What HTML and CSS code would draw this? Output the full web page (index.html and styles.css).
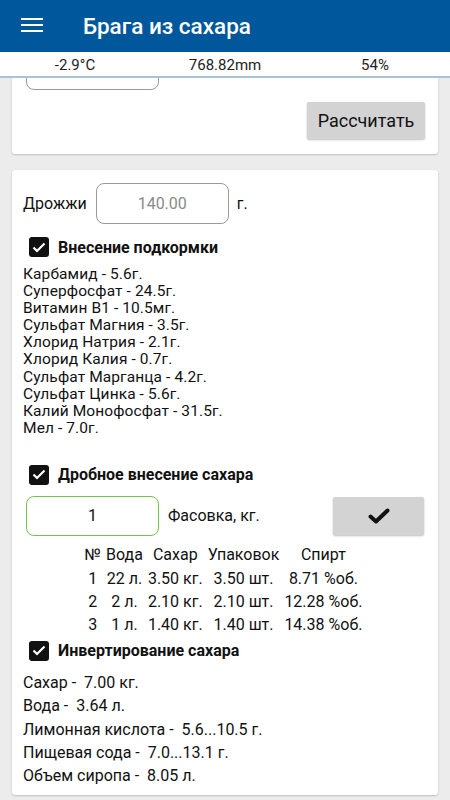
FILE: index.html
```html
<!DOCTYPE html>
<html lang="ru">
<head>
<meta charset="utf-8">
<title>Брага из сахара</title>
<link rel="stylesheet" href="styles.css">
</head>
<body>
<div class="app">
  <header class="topbar">
    <svg class="menu" width="22" height="14" viewBox="0 0 22 14"><rect x="0" y="0" width="22" height="2" fill="#fff"/><rect x="0" y="6" width="22" height="2" fill="#fff"/><rect x="0" y="12" width="22" height="2" fill="#fff"/></svg>
    <h1 class="title">Брага из сахара</h1>
  </header>
  <div class="weather">
    <span>-2.9°C</span>
    <span>768.82mm</span>
    <span>54%</span>
  </div>
  <main class="content">
    <div class="scroll">
      <section class="card card-top">
        <div class="row-top">
          <div class="field field-top"></div>
        </div>
        <div class="row-btn">
          <button class="btn">Рассчитать</button>
        </div>
      </section>

      <section class="card card-main">
        <div class="row">
          <span class="label">Дрожжи</span>
          <div class="field field-gray">140.00</div>
          <span class="unit">г.</span>
        </div>

        <div class="check-row">
          <span class="checkbox"><svg width="14" height="11" viewBox="0 0 14 11"><path d="M1.5 5.5 L5 9 L12.5 1.5" fill="none" stroke="#fff" stroke-width="2.2"/></svg></span>
          <span class="check-label">Внесение подкормки</span>
        </div>

        <ul class="list">
          <li>Карбамид - 5.6г.</li>
          <li>Суперфосфат - 24.5г.</li>
          <li>Витамин В1 - 10.5мг.</li>
          <li>Сульфат Магния - 3.5г.</li>
          <li>Хлорид Натрия - 2.1г.</li>
          <li>Хлорид Калия - 0.7г.</li>
          <li>Сульфат Марганца - 4.2г.</li>
          <li>Сульфат Цинка - 5.6г.</li>
          <li>Калий Монофосфат - 31.5г.</li>
          <li>Мел - 7.0г.</li>
        </ul>

        <div class="check-row check-row-2">
          <span class="checkbox"><svg width="14" height="11" viewBox="0 0 14 11"><path d="M1.5 5.5 L5 9 L12.5 1.5" fill="none" stroke="#fff" stroke-width="2.2"/></svg></span>
          <span class="check-label">Дробное внесение сахара</span>
        </div>

        <div class="row row-pack">
          <div class="field field-green">1</div>
          <span class="pack-label">Фасовка, кг.</span>
          <button class="btn btn-check"><svg width="22" height="16" viewBox="0 0 22 16"><path d="M2.5 8.5 L8 13.5 L19.5 2.5" fill="none" stroke="#111" stroke-width="4" stroke-linecap="round" stroke-linejoin="round"/></svg></button>
        </div>

        <table class="tbl">
          <thead>
            <tr><th>№</th><th>Вода</th><th>Сахар</th><th>Упаковок</th><th>Спирт</th></tr>
          </thead>
          <tbody>
            <tr><td>1</td><td>22 л.</td><td>3.50 кг.</td><td>3.50 шт.</td><td>8.71 %об.</td></tr>
            <tr><td>2</td><td>2 л.</td><td>2.10 кг.</td><td>2.10 шт.</td><td>12.28 %об.</td></tr>
            <tr><td>3</td><td>1 л.</td><td>1.40 кг.</td><td>1.40 шт.</td><td>14.38 %об.</td></tr>
          </tbody>
        </table>

        <div class="check-row check-row-3">
          <span class="checkbox"><svg width="14" height="11" viewBox="0 0 14 11"><path d="M1.5 5.5 L5 9 L12.5 1.5" fill="none" stroke="#fff" stroke-width="2.2"/></svg></span>
          <span class="check-label">Инвертирование сахара</span>
        </div>

        <ul class="list list-inv">
          <li>Сахар -&nbsp; 7.00 кг.</li>
          <li>Вода -&nbsp; 3.64 л.</li>
          <li>Лимонная кислота -&nbsp; 5.6...10.5 г.</li>
          <li>Пищевая сода -&nbsp; 7.0...13.1 г.</li>
          <li>Объем сиропа -&nbsp; 8.05 л.</li>
        </ul>
      </section>
    </div>
  </main>
</div>
</body>
</html>
```

FILE: styles.css
```css
* { box-sizing: border-box; }
html, body { margin: 0; padding: 0; }
body {
  font-family: Roboto, "Noto Sans", sans-serif;
  background: #ececec;
  color: #111;
  width: 450px;
  height: 800px;
  overflow: hidden;
}
.app { display: flex; flex-direction: column; height: 800px; }
.topbar {
  height: 52px;
  background: #01579b;
  display: flex;
  align-items: center;
  padding-left: 21px;
  flex: none;
}
.menu { display: block; margin-top: -3px; }
.title {
  margin: 0 0 0 40px;
  color: #fff;
  font-size: 22.5px;
  font-weight: 500;
}
.weather {
  height: 26px;
  background: #fff;
  border-bottom: 2px solid #a8c2da;
  display: grid;
  grid-template-columns: 1fr 1fr 1fr;
  align-items: center;
  font-size: 15px;
  color: #222;
  text-align: center;
  flex: none;
  position: relative;
  z-index: 2;
}
.weather span { padding-top: 1px; }
.content { flex: 1; overflow: hidden; }
.scroll { padding: 0 12px; }
.card {
  background: #fff;
  border-radius: 3px;
  box-shadow: 0 1px 2px rgba(0,0,0,0.18), 0 0 1px rgba(0,0,0,0.08);
}
.card-top {
  margin-top: -30px;
  padding: 0 13px 15px 14px;
}
.row-top { display: flex; align-items: center; height: 42px; }
.field-top {
  width: 178px;
  height: 42px;
  border: 1px solid #9a9a9a;
  border-radius: 8px;
}
.row-btn { display: flex; justify-content: flex-end; margin-top: 12px; }
.btn {
  font-family: Roboto, "Noto Sans", sans-serif;
  background: #d3d3d3;
  border: none;
  border-radius: 2px;
  box-shadow: 0 1px 2px rgba(0,0,0,0.25);
  font-size: 18px;
  color: #111;
  height: 37px;
  width: 118px;
  padding: 0;
}
.card-main {
  margin-top: 16px;
  padding: 13px 14px 8px 11px;
}
.row { display: flex; align-items: center; }
.label { font-size: 16px; }
.field {
  width: 133px;
  height: 41px;
  border-radius: 8px;
  display: flex;
  align-items: center;
  justify-content: center;
  font-size: 16px;
}
.field-gray { border: 1px solid #9a9a9a; color: #8a8a8a; margin-left: 9px; }
.unit { margin-left: 8px; font-size: 16px; }
.check-row { display: flex; align-items: center; height: 24px; margin-top: 11px; padding-left: 6px; }
.checkbox {
  width: 20px;
  height: 20px;
  background: #111;
  border-radius: 3px;
  display: flex;
  align-items: center;
  justify-content: center;
}
.checkbox svg { display: block; }
.check-label { font-size: 16px; font-weight: 700; margin-left: 9px; }
.list {
  list-style: none;
  margin: 7px 0 0 0;
  padding: 0;
  font-size: 15.5px;
  line-height: 17.1px;
  letter-spacing: 0.1px;
}
.list li { height: 17.1px; }
.check-row-2 { margin-top: 26px; }
.row-pack { margin-top: 9px; padding-left: 3px; }
.field-green { border: 1.5px solid #72c54a; height: 40px; }
.pack-label { margin-left: 9px; font-size: 16px; flex: 1; }
.btn-check {
  width: 91px;
  height: 38px;
  display: flex;
  align-items: center;
  justify-content: center;
}
.btn-check svg { display: block; }
.tbl {
  margin: 7px auto 0;
  border-collapse: collapse;
  font-size: 16px;
}
.tbl th, .tbl td {
  font-weight: 400;
  text-align: center;
  padding: 0 2.5px;
  height: 23px;
}
.tbl th { height: 24px; }
.check-row-3 { margin-top: 3px; }
.list-inv { margin-top: 8px; line-height: 23.3px; font-size: 16px; letter-spacing: 0; }
.list-inv li { height: 23.3px; }
```
